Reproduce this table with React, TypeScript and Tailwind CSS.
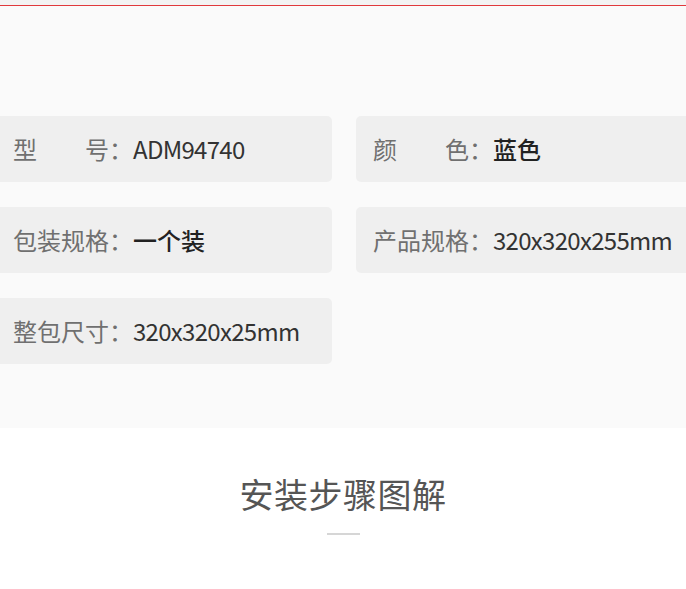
import React from "react";

type Spec = { label: string; value: string; justify?: boolean; cjk?: boolean };

const rows: Spec[][] = [
  [
    { label: "型号", value: "ADM94740", justify: true },
    { label: "颜色", value: "蓝色", justify: true, cjk: true },
  ],
  [
    { label: "包装规格", value: "一个装", cjk: true },
    { label: "产品规格", value: "320x320x255mm" },
  ],
  [{ label: "整包尺寸", value: "320x320x25mm" }],
];

const SpecCard = ({ spec }: { spec: Spec }) => {
  return (
    <div className="flex h-[66px] w-[336px] shrink-0 items-center rounded-[5px] bg-[#efefef] pl-[17px]">
      {spec.justify ? (
        <span className="flex w-[96px] justify-between text-[#707070]">
          {spec.label.split("").map((ch) => (
            <span key={ch}>{ch}</span>
          ))}
        </span>
      ) : (
        <span className="text-[#707070]">{spec.label}</span>
      )}
      <span className="text-[#707070]">：</span>
      <span
        className={
          spec.cjk ? "font-medium text-[#222]" : "tracking-[-0.7px] text-[#333]"
        }
      >
        {spec.value}
      </span>
    </div>
  );
};

const App = () => {
  return (
    <div
      className="min-h-screen w-[686px] overflow-hidden bg-white"
      style={{ fontFamily: '"Noto Sans CJK SC", "Noto Sans", sans-serif' }}
    >
      <div className="h-[5px] bg-[#f3f3f3]" />
      <div className="h-px bg-[#e0393c]" />
      <div className="bg-[#fafafa] pt-[110px] pb-[64px]">
        <div className="ml-[-4px] flex flex-col gap-[25px] text-[24px] leading-none">
          {rows.map((row, i) => (
            <div key={i} className="flex gap-[24px]">
              {row.map((spec) => (
                <SpecCard key={spec.label} spec={spec} />
              ))}
            </div>
          ))}
        </div>
      </div>
      <div className="flex flex-col items-center pt-[49px]">
        <h2 className="text-[34px] leading-none tracking-[0.5px] text-[#555]">安装步骤图解</h2>
        <div className="mt-[22px] h-[2px] w-[33px] bg-[#d6d6d6]" />
      </div>
    </div>
  );
};

export default App;
